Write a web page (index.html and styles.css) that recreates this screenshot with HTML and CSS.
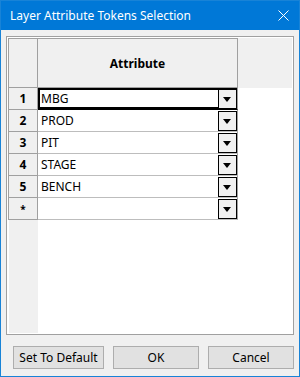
FILE: index.html
```html
<!DOCTYPE html>
<html lang="en">

<head>
    <meta charset="UTF-8">
    <title>Layer Attribute Tokens Selection</title>
    <link rel="stylesheet" href="styles.css">
</head>

<body>
    <div class="window">
        <div class="titlebar">
            <span class="title">Layer Attribute Tokens Selection</span>
            <svg class="close" width="11" height="11" viewBox="0 0 11 11">
                <path d="M0.5 0.5 L10.5 10.5 M10.5 0.5 L0.5 10.5" stroke="#fff" stroke-width="1" fill="none"/>
            </svg>
        </div>
        <div class="content">
            <div class="grid">
                <div class="grid-inner">
                    <div class="corner"></div>
                    <div class="col-head">Attribute</div>
                    <div class="head-fill"></div>

                    <div class="row-head">1</div>
                    <div class="cell selected"><span>MBG</span><div class="drop"></div></div>
                    <div class="fill"></div>

                    <div class="row-head">2</div>
                    <div class="cell"><span>PROD</span><div class="drop"></div></div>
                    <div class="fill"></div>

                    <div class="row-head">3</div>
                    <div class="cell"><span>PIT</span><div class="drop"></div></div>
                    <div class="fill"></div>

                    <div class="row-head">4</div>
                    <div class="cell"><span>STAGE</span><div class="drop"></div></div>
                    <div class="fill"></div>

                    <div class="row-head">5</div>
                    <div class="cell"><span>BENCH</span><div class="drop"></div></div>
                    <div class="fill"></div>

                    <div class="row-head star">*</div>
                    <div class="cell"><span></span><div class="drop"></div></div>
                    <div class="fill"></div>

                    <div class="side-fill"></div>
                    <div class="body-fill"></div>
                </div>
            </div>
            <div class="buttons">
                <button class="btn btn-wide">Set To Default</button>
                <button class="btn">OK</button>
                <button class="btn">Cancel</button>
            </div>
        </div>
    </div>
</body>

</html>
```

FILE: styles.css
```css
body {
    margin: 0;
}

.window {
    width: 300px;
    height: 377px;
    box-sizing: border-box;
    border: 1px solid #1883d7;
    background-color: #f0f0f0;
    display: flex;
    flex-direction: column;
    font-family: "Noto Sans", sans-serif;
    font-size: 12px;
    color: #000;
}

.titlebar {
    height: 29px;
    background-color: #0078d7;
    display: flex;
    align-items: center;
    justify-content: space-between;
    padding: 0 10px 0 9px;
    flex-shrink: 0;
}

.title {
    color: #fff;
    font-size: 12px;
}

.content {
    flex: 1;
    display: flex;
    flex-direction: column;
    padding: 6px 5px 7px 5px;
}

.grid {
    height: 299px;
    box-sizing: border-box;
    border: 1px solid #a0a0a0;
    padding: 1px;
    background-color: #fff;
}

.grid-inner {
    height: 100%;
    display: grid;
    grid-template-columns: 30px 200px 1fr;
    grid-template-rows: 50px repeat(6, 22px) 1fr;
}

.corner,
.col-head,
.row-head {
    background-color: #f0f0f0;
    border-right: 1px solid #a0a0a0;
    border-bottom: 1px solid #a0a0a0;
}

.corner {
    border-left: 1px solid #a0a0a0;
    border-top: 1px solid #a0a0a0;
}

.col-head {
    border-top: 1px solid #a0a0a0;
    display: flex;
    align-items: center;
    justify-content: center;
    font-weight: bold;
}

.head-fill {
    background-color: #f0f0f0;
}

.row-head {
    border-left: 1px solid #a0a0a0;
    display: flex;
    align-items: center;
    justify-content: center;
    font-weight: bold;
}

.star {
    font-size: 10px;
}

.cell {
    position: relative;
    border-right: 1px solid #a0a0a0;
    border-bottom: 1px solid #bdbdbd;
    display: flex;
    align-items: center;
    padding-left: 3px;
}

.cell.selected {
    box-shadow: inset 0 0 0 2px #000;
    border-bottom-color: #000;
}

.drop {
    position: absolute;
    right: 0;
    top: 1px;
    width: 17px;
    height: 18px;
    border: 1px solid #000;
    background-color: #f0f0f0;
}

.drop::after {
    content: "";
    position: absolute;
    left: 4px;
    top: 7px;
    border-left: 4.5px solid transparent;
    border-right: 4.5px solid transparent;
    border-top: 5px solid #000;
}

.side-fill {
    background-color: #f0f0f0;
    margin-left: 1px;
}

.body-fill {
    grid-column: 2 / 4;
}

.buttons {
    display: flex;
    gap: 9px;
    margin-top: 11px;
    padding-left: 7px;
}

.btn {
    width: 86px;
    height: 23px;
    box-sizing: border-box;
    background-color: #e1e1e1;
    border: 1px solid #adadad;
    font-family: "Noto Sans", sans-serif;
    font-size: 12px;
    color: #000;
    padding: 0;
}

.btn-wide {
    width: 91px;
}
```
